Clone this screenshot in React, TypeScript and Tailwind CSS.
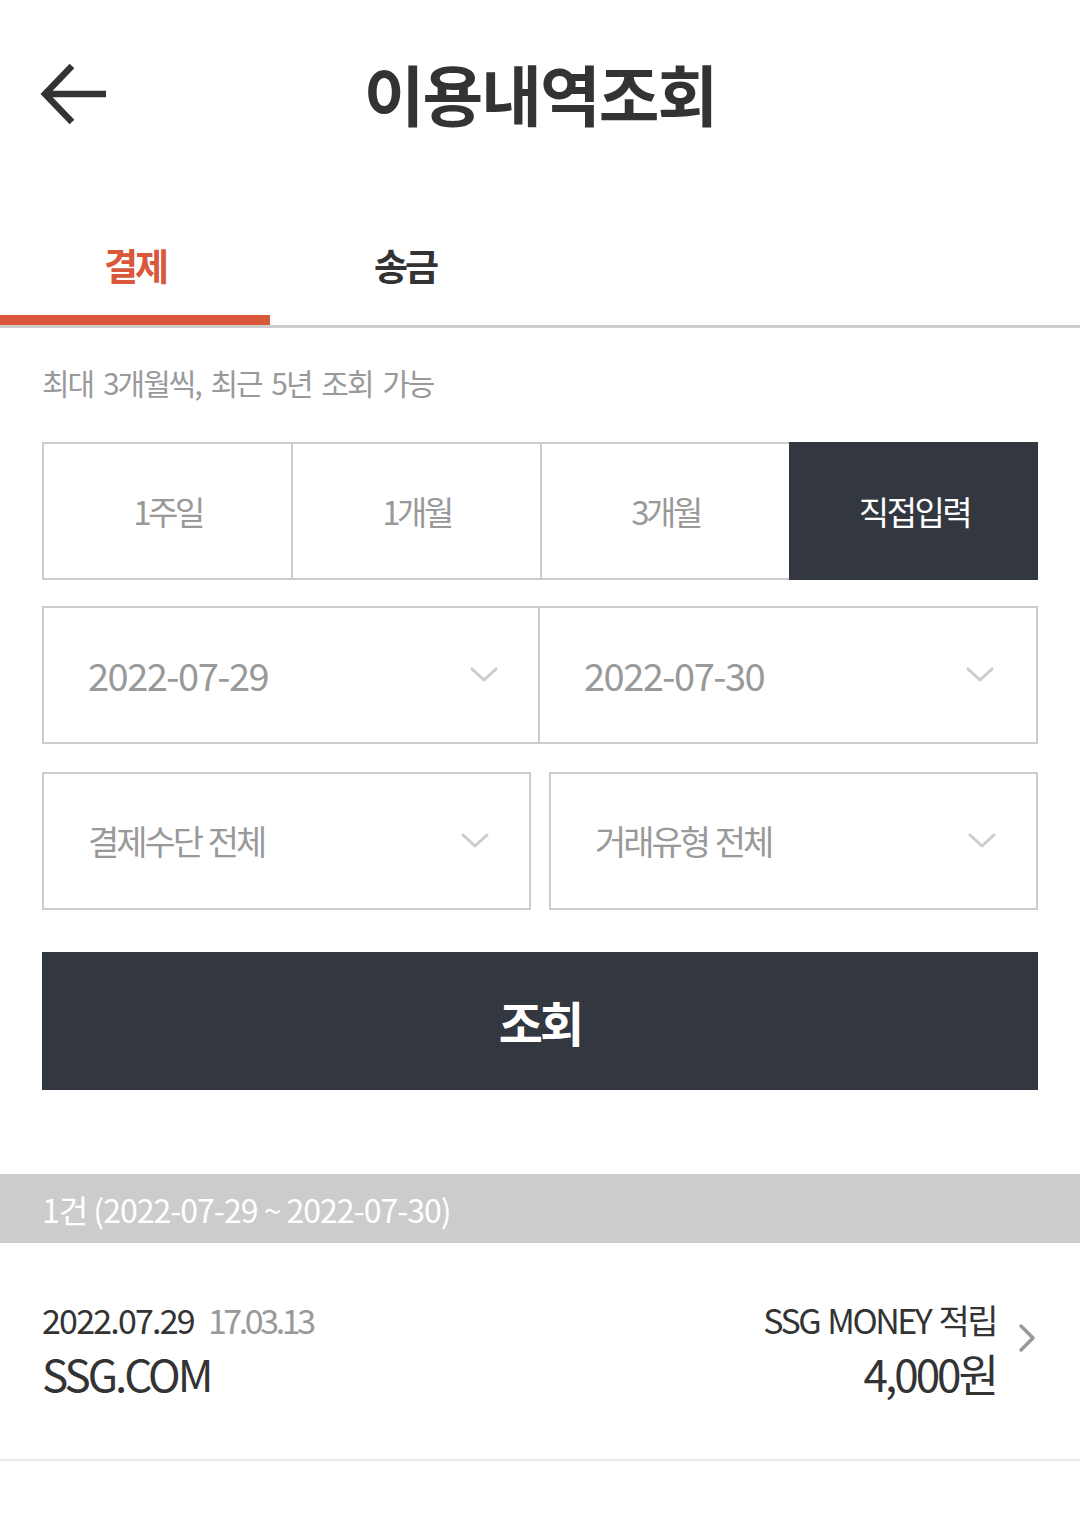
import React from "react";

const F = "font-['Noto_Sans_CJK_KR','Noto_Sans',sans-serif]";

function ChevronDown() {
  return (
    <svg width="28" height="16" viewBox="0 0 28 16" fill="none">
      <path d="M2 2 L14 13 L26 2" stroke="#cccccc" strokeWidth="3" strokeLinecap="round" strokeLinejoin="round" />
    </svg>
  );
}

function Select({ label }: { label: string }) {
  return (
    <div className="flex h-full flex-1 items-center justify-between pl-[44px] pr-[40px]">
      <span className="text-[34px] leading-none tracking-[-3px] [word-spacing:2px] text-[#999999]">{label}</span>
      <ChevronDown />
    </div>
  );
}

export default function App() {
  const periods = ["1주일", "1개월", "3개월", "직접입력"];
  return (
    <div className={`${F} min-h-[1534px] w-[1080px] bg-white`}>
      {/* Header */}
      <div className="grid h-[190px] grid-cols-[1fr_auto_1fr] items-center pb-[6px]">
        <div className="pl-[40px] pt-[4px]">
          <svg width="66" height="62" viewBox="0 0 66 62" fill="none">
            <path d="M32 3 L5 31 L32 59" stroke="#333333" strokeWidth="6.5" />
            <path d="M6 31 H66" stroke="#333333" strokeWidth="6.5" />
          </svg>
        </div>
        <h1 className="text-[66px] font-bold leading-none tracking-[-2px] text-[#333333]">이용내역조회</h1>
        <div />
      </div>

      {/* Tabs */}
      <div className="flex border-b-[3px] border-[#cccccc]">
        <div className="flex h-[135px] w-[270px] items-end justify-center border-b-[10px] border-[#d9583c] pb-[31px]">
          <span className="text-[37px] font-bold leading-none tracking-[-3px] text-[#d9583c]">결제</span>
        </div>
        <div className="flex h-[135px] w-[270px] items-end justify-center border-b-[10px] border-transparent pb-[31px]">
          <span className="text-[37px] font-bold leading-none tracking-[-3px] text-[#333333]">송금</span>
        </div>
      </div>

      <div className="px-[42px]">
        <p className="pt-[37px] text-[30px] leading-[34px] tracking-[-2px] [word-spacing:5px] text-[#999999]">
          최대 3개월씩, 최근 5년 조회 가능
        </p>

        {/* Period buttons */}
        <div className="mt-[43px] flex h-[138px]">
          {periods.map((p, i) => {
            const active = i === 3;
            return (
              <div
                key={p}
                className={`flex flex-1 items-center justify-center border-y-2 border-l-2 ${
                  active ? "border-[#333740] bg-[#333740] text-white" : "border-[#cccccc] text-[#999999]"
                }`}
              >
                <span className={`text-[33px] leading-none ${active ? "tracking-[-2.5px]" : "tracking-[-3.5px]"}`}>{p}</span>
              </div>
            );
          })}
        </div>

        {/* Date row */}
        <div className="mt-[26px] flex h-[138px] border-2 border-[#cccccc]">
          <div className="flex flex-1 items-center justify-between pl-[44px] pr-[40px]">
            <span className="text-[38px] leading-none tracking-[-1.5px] text-[#999999]">2022-07-29</span>
            <ChevronDown />
          </div>
          <div className="flex flex-1 items-center justify-between border-l-2 border-[#cccccc] pl-[44px] pr-[42px]">
            <span className="text-[38px] leading-none tracking-[-1.5px] text-[#999999]">2022-07-30</span>
            <ChevronDown />
          </div>
        </div>

        {/* Select row */}
        <div className="mt-[28px] flex h-[138px] gap-[18px]">
          <div className="flex flex-1 border-2 border-[#cccccc]">
            <Select label="결제수단 전체" />
          </div>
          <div className="flex flex-1 border-2 border-[#cccccc]">
            <Select label="거래유형 전체" />
          </div>
        </div>

        {/* Search button */}
        <button className="mt-[42px] flex h-[138px] w-full items-center justify-center bg-[#333740]">
          <span className="text-[48px] font-bold leading-none tracking-[-3px] text-white">조회</span>
        </button>
      </div>

      {/* Summary bar */}
      <div className="mt-[84px] flex h-[69px] items-center bg-[#cccccc] px-[42px]">
        <span className="text-[32px] leading-none tracking-[-1px] text-white">1건 (2022-07-29 ~ 2022-07-30)</span>
      </div>

      {/* Item */}
      <div className="flex h-[218px] items-center justify-between border-b-2 border-[#e8e8e8] pb-[4px] pl-[42px] pr-[44px]">
        <div className="flex flex-col gap-[14px]">
          <div className="flex items-baseline gap-[14px] leading-none">
            <span className="text-[34px] tracking-[-1.8px] text-[#333333]">2022.07.29</span>
            <span className="text-[34px] tracking-[-3.4px] text-[#999999]">17.03.13</span>
          </div>
          <span className="text-[44px] leading-none tracking-[-3px] text-[#333333]">SSG.COM</span>
        </div>
        <div className="flex items-start gap-[22px]">
          <div className="flex flex-col items-end gap-[14px]">
            <span className="text-[34px] leading-none tracking-[-2.5px] [word-spacing:3px] text-[#333333]">SSG MONEY 적립</span>
            <span className="text-[44px] leading-none tracking-[-3px] text-[#333333]">4,000원</span>
          </div>
          <svg className="mt-[20px]" width="18" height="30" viewBox="0 0 18 30" fill="none">
            <path d="M3 3 L15 15 L3 27" stroke="#999999" strokeWidth="3.5" strokeLinecap="round" strokeLinejoin="round" />
          </svg>
        </div>
      </div>
    </div>
  );
}
